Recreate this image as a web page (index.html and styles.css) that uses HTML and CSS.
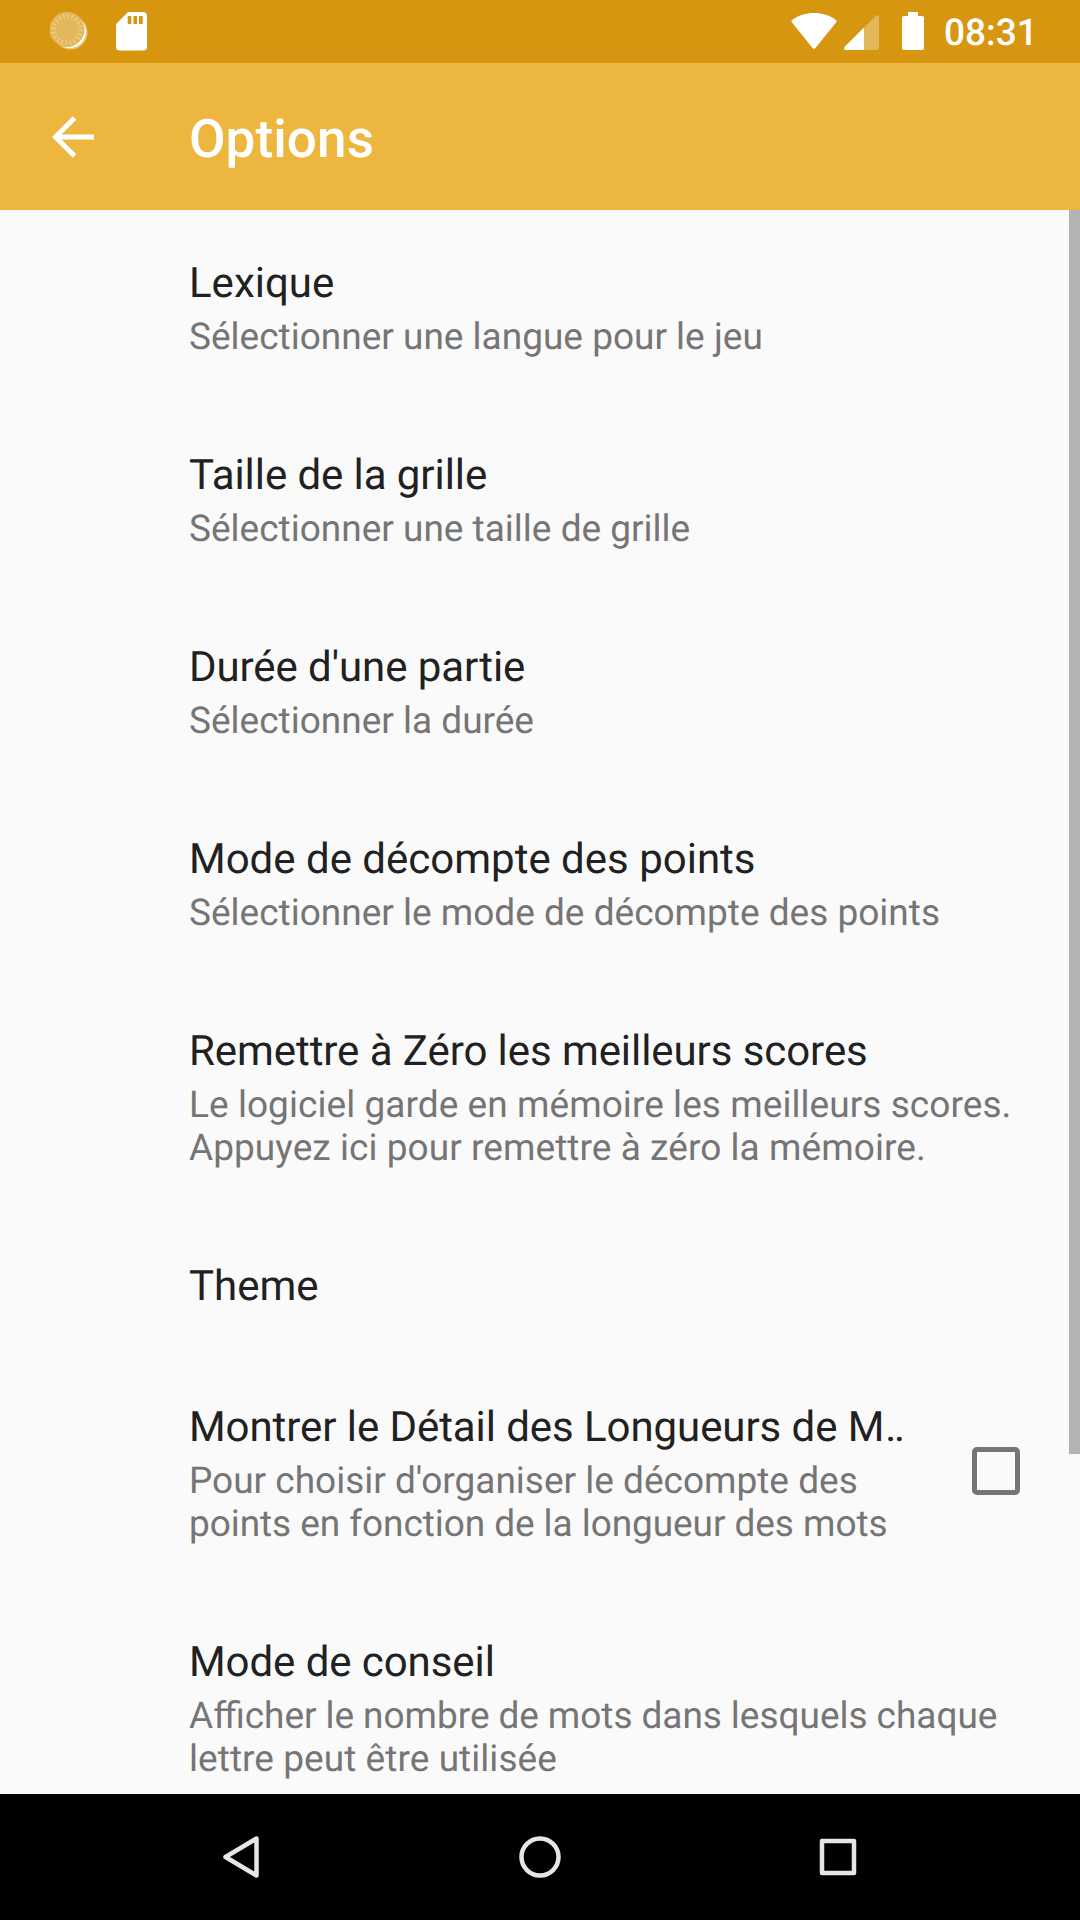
FILE: index.html
```html
<!DOCTYPE html>
<html lang="fr">
<head>
<meta charset="utf-8">
<title>Options</title>
<link rel="stylesheet" href="styles.css">
</head>
<body>
<div class="screen">
  <header class="status">
    <svg class="spinner" width="38" height="38" viewBox="0 0 38 38"><circle cx="20.500" cy="20.500" r="17" fill="#e9c878"/><circle cx="19.500" cy="19.500" r="16.500" fill="#fff"/><circle cx="17" cy="17.500" r="17.500" fill="#e3b75b"/><circle cx="17" cy="17.500" r="13.500" fill="none" stroke="#ebcb86" stroke-width="5" stroke-dasharray="1.500 2.741"/></svg>
    <svg class="sd" width="31" height="39" viewBox="0 0 31 39"><path fill="#fff" fill-rule="evenodd" d="M12 0H27Q31 0 31 4V35Q31 38.500 27 38.500H4Q0 38.500 0 35V12ZM11.700 4V12H15.300V4ZM17.500 4V12H21V4ZM23 4V12H26.700V4Z"/></svg>
    <span class="fill"></span>
    <svg class="wifi" width="46" height="38" viewBox="0 0 46 38"><path fill="#fff" d="M1 8C13-1.500 33-1.500 45 8Q46 9 45 10.500L24.500 36Q23 37.500 21.500 36L1 10.500Q0 9 1 8Z"/></svg>
    <svg class="signal" width="35" height="35" viewBox="0 0 35 35"><path fill="#e2b759" d="M20 12.500L32 .5Q35-.5 35 2.500V33Q35 35 33 35H20Z"/><path fill="#fff" d="M20 12.500V35H1.500Q-.5 34.500 .5 32Z"/></svg>
    <svg class="battery" width="22" height="38" viewBox="0 0 22 38"><path fill="#fff" d="M6 0H16V4H20Q22 4 22 6V36Q22 38 20 38H2Q0 38 0 36V6Q0 4 2 4H6Z"/></svg>
    <time>08:31</time>
  </header>
  <div class="toolbar">
    <svg class="back" width="42" height="42" viewBox="0 0 42 42"><path d="M42 21H5M22.500 2L3.500 21L22.500 40" fill="none" stroke="#fff" stroke-width="5"/></svg>
    <h1>Options</h1>
  </div>
  <main>
    <section class="item"><h2>Lexique</h2><p>Sélectionner une langue pour le jeu</p></section>
    <section class="item"><h2 class="snug">Taille de la grille</h2><p>Sélectionner une taille de grille</p></section>
    <section class="item"><h2 class="snug">Durée d'une partie</h2><p>Sélectionner la durée</p></section>
    <section class="item"><h2>Mode de décompte des points</h2><p>Sélectionner le mode de décompte des points</p></section>
    <section class="item"><h2 class="snug">Remettre à Zéro les meilleurs scores</h2><p class="loose">Le logiciel garde en mémoire les meilleurs scores.<br>Appuyez ici pour remettre à zéro la mémoire.</p></section>
    <section class="item single"><h2>Theme</h2></section>
    <section class="item check"><div><h2 class="snug">Montrer le Détail des Longueurs de M<span class="dots">..</span></h2><p>Pour choisir d'organiser le décompte des<br><span class="snug">points en fonction de la longueur des mots</span></p></div><span class="box"></span></section>
    <section class="item"><h2 class="snug">Mode de conseil</h2><p><span class="ligated">Afficher le nombre de mots dans lesquels chaque</span><br><span class="loose">lettre peut être utilisée</span></p></section>
    <div class="scroll"></div>
  </main>
  <nav>
    <svg width="48" height="48" viewBox="0 0 48 48"><path d="M38.500 5.500V42.500L7.500 24Z"/></svg>
    <svg width="48" height="48" viewBox="0 0 48 48"><circle cx="24" cy="24" r="18.500"/></svg>
    <svg width="48" height="48" viewBox="0 0 48 48"><rect x="8" y="8" width="32" height="32"/></svg>
  </nav>
</div>
</body>
</html>
```
FILE: styles.css
```css
* { box-sizing: border-box; margin: 0; padding: 0; }
body { font-family: Roboto, sans-serif; background: #fafafa; text-rendering: geometricPrecision; }
.screen { width: 1080px; height: 1920px; display: flex; flex-direction: column; overflow: hidden; }
svg { display: block; flex: none; }
.status { height: 63px; flex: none; background: #d7960f; display: flex; align-items: flex-start; padding: 12px 43px 0 50px; color: #fff; }
.sd { margin-left: 28px; }
.fill { flex: 1; }
.signal { margin: 3px 23px 0 7px; }
.status time { width: 93px; font-size: 37px; font-weight: 500; line-height: 44px; margin-left: 20px; }
.toolbar { height: 147px; flex: none; background: #ecb63f; display: flex; align-items: center; padding-left: 52px; color: #fff; }
.toolbar h1 { font-size: 53px; font-weight: 500; line-height: 62px; margin-left: 95px; padding-top: 4px; letter-spacing: 0.100px; }
main { position: relative; flex: 1; min-height: 0; overflow: hidden; padding-top: 1px; }
.item { padding: 48px 0 44px 189px; white-space: nowrap; }
.item h2 { font-size: 42px; line-height: 50px; font-weight: 400; color: #212121; }
.item .snug { letter-spacing: -0.070px; }
.item .loose { letter-spacing: 0.060px; }
.ligated { word-spacing: -0.300px; }
.dots { letter-spacing: -2.500px; margin-left: 1px; }
.item p { font-size: 37px; line-height: 43px; color: #757575; padding-top: 7px; }
.single { padding-bottom: 43px; }
.check { display: flex; justify-content: space-between; align-items: center; padding-right: 60px; }
.box { width: 48px; height: 48px; border: 5px solid #757575; border-radius: 5px; margin-bottom: 7px; }
.scroll { position: absolute; top: 0; right: 0; width: 11px; height: 1244px; background: #b3b3b3; }
nav { height: 126px; flex: none; background: #000; display: flex; justify-content: center; align-items: center; gap: 250px; }
nav svg { fill: none; stroke: #e6e6e6; stroke-width: 4.500; stroke-linejoin: round; }
```
